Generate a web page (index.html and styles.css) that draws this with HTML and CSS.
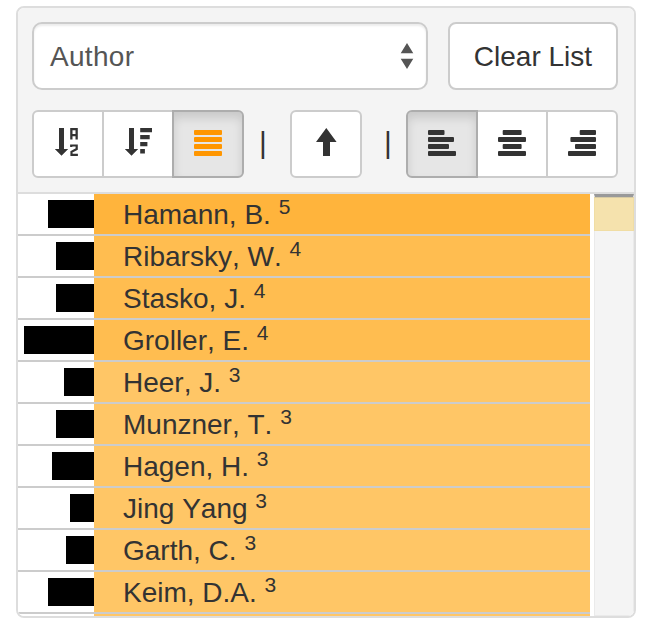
FILE: index.html
```html
<!DOCTYPE html>
<html lang="en">
<head>
<meta charset="utf-8">
<title>Author list</title>
<link rel="stylesheet" href="styles.css">
</head>
<body>
<section class="panel">
  <header class="panel-head">
    <div class="row-top">
      <div class="select"><span>Author</span>
        <svg class="carets" width="14" height="26" viewBox="0 0 14 26"><path d="M7 0L13.3 10.3H.7zM.7 15.7H13.3L7 26z"/></svg>
      </div>
      <button class="btn clear">Clear List</button>
    </div>
    <div class="row-tools">
      <div class="group">
        <button class="btn tool" aria-label="Sort by name"><svg width="28" height="28" viewBox="0 0 28 28"><path d="M5 0h5v21h4.200l-6.700 6.700-6.700-6.700H5zM16.200 0h7.600v11.600h-2.300V8.200h-3v3.400h-2.300zM18.500 2.200v3.800h3V2.200z" fill-rule="evenodd"/><path class="stroke" d="M17.200 19V17.500H22.700V21L17.500 23.800V26.900H23.900"/></svg></button>
        <button class="btn tool" aria-label="Sort by frequency"><svg width="28" height="28" viewBox="0 0 28 28"><path d="M5 0h5v21h4.200l-6.700 6.700-6.700-6.700H5zM16.200 0h11.800v4.200h-11.800zM16.200 7h9.500v4.300h-9.500zM16.200 14h7.200v4.200h-7.200zM16.200 21h4.700v4.600h-4.700z"/></svg></button>
        <button class="btn tool active mode" aria-label="List mode"><svg width="28" height="28" viewBox="0 0 28 28"><rect y="2" width="28" height="5" rx="1"/><rect y="9" width="28" height="5" rx="1"/><rect y="16" width="28" height="5" rx="1"/><rect y="23" width="28" height="5" rx="1"/></svg></button>
      </div>
      <span class="sep sep-a">|</span>
      <button class="btn tool single" aria-label="Move up"><svg width="28" height="28" viewBox="0 0 28 28"><path d="M14.300 0L24.600 14H18v14h-7V14H4z"/></svg></button>
      <span class="sep sep-b">|</span>
      <div class="group">
        <button class="btn tool active" aria-label="Align left"><svg width="28" height="28" viewBox="0 0 28 28"><rect y="2" width="16.500" height="5" rx="1"/><rect y="9" width="26" height="5" rx="1"/><rect y="16" width="21" height="5" rx="1"/><rect y="23" width="28" height="5" rx="1"/></svg></button>
        <button class="btn tool" aria-label="Align center"><svg width="28" height="28" viewBox="0 0 28 28"><rect x="4.700" y="2" width="18.900" height="5" rx="1"/><rect y="9" width="28" height="5" rx="1"/><rect x="4.700" y="16" width="18.900" height="5" rx="1"/><rect y="23" width="28" height="5" rx="1"/></svg></button>
        <button class="btn tool" aria-label="Align right"><svg width="28" height="28" viewBox="0 0 28 28"><rect x="11.700" y="2" width="16.300" height="5" rx="1"/><rect x="2.400" y="9" width="25.600" height="5" rx="1"/><rect x="7" y="16" width="21" height="5" rx="1"/><rect y="23" width="28" height="5" rx="1"/></svg></button>
      </div>
    </div>
  </header>
  <div class="panel-body">
    <ul class="list">
      <li class="item w5"><span class="meter"><i style="width:46px"></i></span><span class="name">Hamann, B. <sup>5</sup></span></li>
      <li class="item w4"><span class="meter"><i style="width:38px"></i></span><span class="name">Ribarsky, W. <sup>4</sup></span></li>
      <li class="item w4"><span class="meter"><i style="width:38px"></i></span><span class="name">Stasko, J. <sup>4</sup></span></li>
      <li class="item w4"><span class="meter"><i style="width:70px"></i></span><span class="name">Groller, E. <sup>4</sup></span></li>
      <li class="item"><span class="meter"><i style="width:30px"></i></span><span class="name">Heer, J. <sup>3</sup></span></li>
      <li class="item"><span class="meter"><i style="width:38px"></i></span><span class="name">Munzner, T. <sup>3</sup></span></li>
      <li class="item"><span class="meter"><i style="width:42px"></i></span><span class="name">Hagen, H. <sup>3</sup></span></li>
      <li class="item"><span class="meter"><i style="width:24px"></i></span><span class="name">Jing Yang <sup>3</sup></span></li>
      <li class="item"><span class="meter"><i style="width:28px"></i></span><span class="name">Garth, C. <sup>3</sup></span></li>
      <li class="item"><span class="meter"><i style="width:46px"></i></span><span class="name">Keim, D.A. <sup>3</sup></span></li>
      <li class="item"><span class="meter"></span><span class="name"></span></li>
    </ul>
    <div class="overview"><div class="window"></div></div>
  </div>
</section>
</body>
</html>
```
FILE: styles.css
```css
* { box-sizing: border-box; }
body {
  margin: 0;
  padding: 6px 12px 8px 16px;
  background: #fff;
  color: #333;
  font: 28px/40px "Liberation Sans", Arial, sans-serif;
  font-kerning: none;
}
.panel {
  width: 620px;
  height: 612px;
  border: 2px solid #ddd;
  border-radius: 8px;
  overflow: hidden;
  display: flex;
  flex-direction: column;
}
.panel-head {
  flex: none;
  height: 186px;
  padding: 14px 16px 14px 14px;
  background: #f4f4f4;
  border-bottom: 2px solid #ddd;
  display: flex;
  flex-direction: column;
  gap: 20px;
}
.row-top, .row-tools {
  display: flex;
  height: 68px;
}
.row-top { gap: 20px; }
.select, .btn {
  height: 68px;
  background: #fff;
  border: 2px solid #ccc;
  border-radius: 8px;
}
.select {
  width: 396px;
  padding: 0 12px 0 16px;
  display: flex;
  align-items: center;
  justify-content: space-between;
  color: #555;
  letter-spacing: .3px;
  border-radius: 10px;
  box-shadow: inset 0 2px 2px rgba(0, 0, 0, .075);
}
.select span { padding-top: 2px; }
.carets { fill: #555; }
.btn {
  padding: 0;
  color: #333;
  font: inherit;
  font-kerning: none;
  display: flex;
  align-items: center;
  justify-content: center;
}
.clear { width: 170px; padding-top: 2px; }
.tool { width: 72px; border-radius: 6px; padding-bottom: 4px; }
.tool svg { fill: #333; }
.tool .stroke { fill: none; stroke: #333; stroke-width: 2.2; }
.group { display: flex; }
.group .tool { border-radius: 0; }
.group .tool + .tool { margin-left: -2px; }
.group .tool:first-child { border-radius: 6px 0 0 6px; }
.group .tool:last-child { border-radius: 0 6px 6px 0; }
.group .active {
  position: relative;
  background: #e6e6e6;
  border-color: #adadad;
  box-shadow: inset 0 6px 10px rgba(0, 0, 0, .125);
}
.tool.mode svg { fill: #ff9600; }
.sep {
  width: 8px;
  font-size: 30px;
  line-height: 66px;
}
.sep-a { margin: 0 23px 0 15px; }
.sep-b { margin: 0 14px 0 22px; }
.panel-body {
  flex: 1;
  min-height: 0;
  display: flex;
  gap: 4px;
  background: #fff;
}
.list {
  flex: 1;
  margin: 0;
  padding: 0;
  list-style: none;
  overflow: hidden;
}
.item {
  height: 42px;
  border-bottom: 2px solid #ccc;
  display: flex;
}
.meter {
  width: 76px;
  display: flex;
  align-items: center;
  justify-content: flex-end;
}
.meter i { height: 28px; background: #000; }
.name {
  flex: 1;
  padding: 1px 0 0 29px;
  line-height: 39px;
  white-space: pre;
  background: #ffc666;
}
.w5 .name { background: #ffb43c; }
.w4 .name { background: #ffbd50; }
sup {
  font-size: 21px;
  line-height: 0;
  position: relative;
  top: -10px;
  vertical-align: baseline;
}
.overview {
  width: 40px;
  background: #f4f4f4;
  border: 1px solid #eaeaea;
  border-top: 3px solid #999;
}
.window {
  height: 34px;
  margin: 0 -1px;
  background: #f5e2ad;
  border: 1px solid #f0dda4;
  border-top-color: #d8cba4;
}
```
